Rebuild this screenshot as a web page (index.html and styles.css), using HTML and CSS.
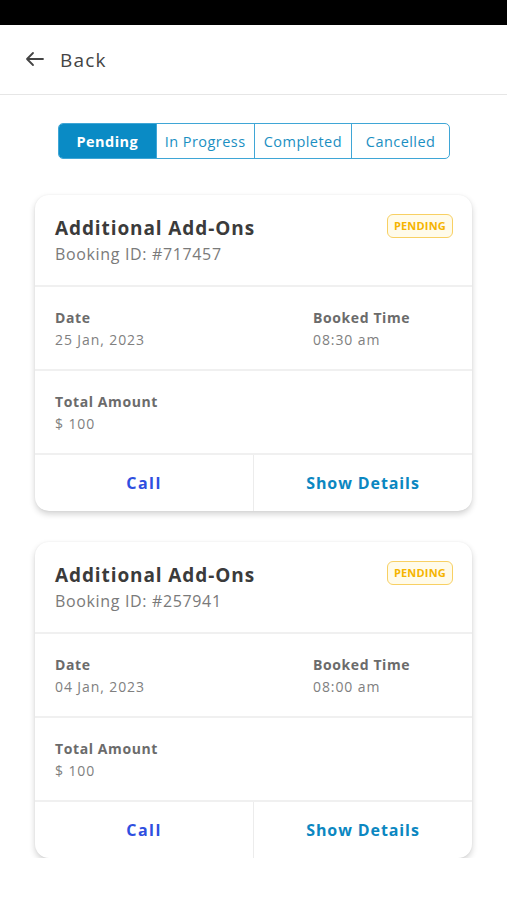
FILE: index.html
```html
<!DOCTYPE html>
<html>
<head>
<meta charset="utf-8">
<link rel="stylesheet" href="styles.css">
</head>
<body>
<div class="statusbar"></div>
<header class="topbar">
  <svg class="back-icon" width="20" height="16" viewBox="0 0 20 16" fill="none" stroke="#444" stroke-width="1.8" stroke-linecap="round" stroke-linejoin="round"><path d="M18 8H2M8 2L2 8l6 6"/></svg>
  <span class="back-text">Back</span>
</header>
<main class="content">
  <nav class="tabs">
    <div class="tab active">Pending</div>
    <div class="tab">In Progress</div>
    <div class="tab">Completed</div>
    <div class="tab">Cancelled</div>
  </nav>

  <section class="card">
    <div class="card-head">
      <div>
        <div class="title">Additional Add-Ons</div>
        <div class="booking">Booking ID: #717457</div>
      </div>
      <span class="badge">PENDING</span>
    </div>
    <div class="row two">
      <div class="field"><div class="label">Date</div><div class="value">25 Jan, 2023</div></div>
      <div class="field"><div class="label">Booked Time</div><div class="value">08:30 am</div></div>
    </div>
    <div class="row">
      <div class="field"><div class="label">Total Amount</div><div class="value">$ 100</div></div>
    </div>
    <div class="actions">
      <div class="action call">Call</div>
      <div class="action details">Show Details</div>
    </div>
  </section>

  <section class="card">
    <div class="card-head">
      <div>
        <div class="title">Additional Add-Ons</div>
        <div class="booking">Booking ID: #257941</div>
      </div>
      <span class="badge">PENDING</span>
    </div>
    <div class="row two">
      <div class="field"><div class="label">Date</div><div class="value">04 Jan, 2023</div></div>
      <div class="field"><div class="label">Booked Time</div><div class="value">08:00 am</div></div>
    </div>
    <div class="row">
      <div class="field"><div class="label">Total Amount</div><div class="value">$ 100</div></div>
    </div>
    <div class="actions">
      <div class="action call">Call</div>
      <div class="action details">Show Details</div>
    </div>
  </section>
</main>
</body>
</html>
```
FILE: styles.css
```css
* { box-sizing: border-box; }
html, body { margin: 0; padding: 0; background: #fff; }
body { font-family: "Open Sans", "Noto Sans", sans-serif; color: #3b3b3b; }

.statusbar { height: 25px; background: #000; }

.topbar {
  height: 70px;
  display: flex;
  align-items: center;
  padding-left: 25px;
  border-bottom: 1px solid #e6e6e6;
}
.back-icon { margin-right: 15px; margin-top: -2px; }
.back-text { font-size: 19px; color: #444; letter-spacing: 1.2px; }

.content { padding: 28px 35px 0; }

.tabs {
  display: flex;
  width: 392px;
  height: 36px;
  margin: 0 auto 0 23px;
  border: 1.5px solid #3fa6d6;
  border-radius: 5px;
  overflow: hidden;
}
.tab {
  flex: 1;
  display: flex;
  align-items: center;
  justify-content: center;
  font-size: 14.5px;
  letter-spacing: 0.45px;
  color: #1b8fc2;
  border-left: 1.5px solid #3fa6d6;
}
.tab:first-child { border-left: none; }
.tab.active { background: #0a8bc5; color: #fff; font-weight: 700; }

.card {
  margin-top: 36px;
  background: #fff;
  border-radius: 14px;
  box-shadow: 0 3px 6px rgba(0,0,0,0.18), 0 0 2px rgba(0,0,0,0.05);
  overflow: hidden;
}
.card + .card { margin-top: 31px; }

.card-head {
  display: flex;
  justify-content: space-between;
  align-items: flex-start;
  padding: 20px 19px 0 20px;
  height: 92px;
  border-bottom: 2px solid #f0f0f0;
}
.title { font-size: 19px; font-weight: 700; color: #3b3b3b; letter-spacing: 0.9px; }
.booking { font-size: 16px; color: #7a7a7a; margin-top: 2px; letter-spacing: 0.65px; }

.badge {
  margin-top: -1px;
  font-size: 11px;
  font-weight: 700;
  color: #f5b400;
  background: #fffbea;
  border: 1.5px solid #f8d063;
  border-radius: 6px;
  padding: 4px 6px;
  line-height: 14px;
  letter-spacing: 0.2px;
}

.row {
  display: flex;
  height: 84px;
  padding: 21px 20px 0;
  border-bottom: 2px solid #f0f0f0;
}
.row.two .field:first-child { width: 258px; }
.label { font-size: 14px; font-weight: 700; color: #6b6b6b; letter-spacing: 0.6px; }
.value { font-size: 14px; color: #808080; margin-top: 3px; letter-spacing: 0.9px; }

.actions { display: flex; height: 56px; }
.action {
  flex: 1;
  display: flex;
  align-items: center;
  justify-content: center;
  font-size: 16px;
  font-weight: 700;
  letter-spacing: 0.9px;
}
.action.call { color: #2f4fe0; border-right: 1px solid #ececec; letter-spacing: 1.5px; }
.action.details { color: #0b87c1; }
```
